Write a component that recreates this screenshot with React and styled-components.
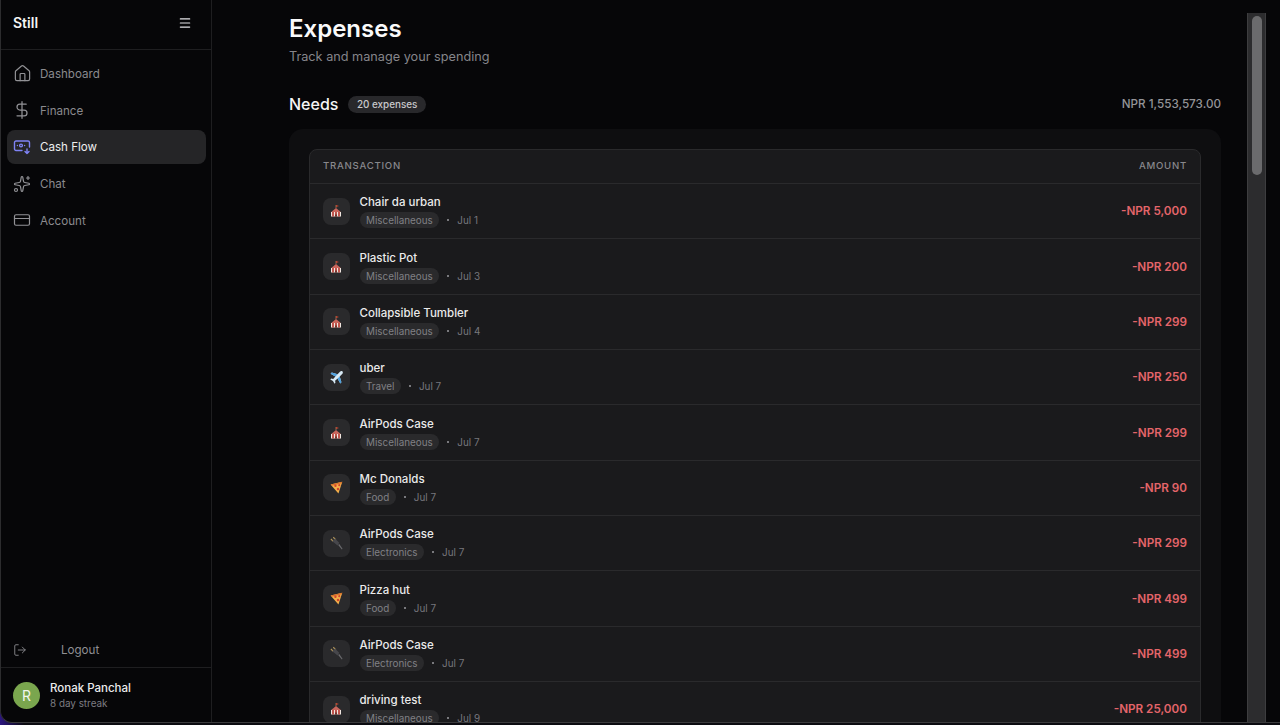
import React from 'react'
import styled, { createGlobalStyle } from 'styled-components'
import { Menu, House, DollarSign, Sparkles, CreditCard, LogOut } from 'lucide-react'

const GlobalStyle = createGlobalStyle`
  html, body {
    margin: 0;
    height: 100%;
    overflow: hidden;
    background: linear-gradient(90deg, #2c1680 0, #0b0b10 24px);
  }
  * { box-sizing: border-box; }
  body {
    font-family: Inter, "Liberation Sans", sans-serif;
    -webkit-font-smoothing: antialiased;
  }
`

const Frame = styled.div`
  display: flex;
  width: 1280px;
  height: 723px;
  background: #060608;
  border-bottom: 1px solid #3a3a3c;
  border-left: 1px solid #2c2c2e;
  border-bottom-left-radius: 12px;
  overflow: hidden;
`

const Sidebar = styled.aside`
  display: flex;
  flex-direction: column;
  flex: 0 0 211px;
  border-right: 1px solid #1e1e20;
`

const Brand = styled.div`
  display: flex;
  align-items: center;
  justify-content: space-between;
  height: 50px;
  padding: 0 19px 4px 12px;
  border-bottom: 1px solid #1e1e20;
`

const Logo = styled.span`
  color: #f5f5f5;
  font-size: 14px;
  font-weight: 600;
`

const MenuButton = styled.span`
  display: flex;
  color: #e4e4e7;
`

const Nav = styled.nav`
  display: flex;
  flex-direction: column;
  flex: 1;
  gap: 3px;
  padding: 7px 5px 0 6px;
`

const NavItem = styled.div`
  display: flex;
  align-items: center;
  gap: 8px;
  height: 33.6px;
  padding-left: 5px;
  border-radius: 8px;
  font-size: 11.6px;
  color: ${({ $active }) => ($active ? '#eeeeee' : '#8a8a8e')};
  background: ${({ $active }) => ($active ? '#252527' : 'transparent')};
`

const NavLabel = styled.span`
  padding-top: 1px;
`

const IconSlot = styled.span`
  display: flex;
  align-items: center;
  justify-content: center;
  flex: none;
  width: 20px;
  height: 20px;
`

const LogoutRow = styled.div`
  display: flex;
  align-items: center;
  gap: 34px;
  height: 34px;
  padding-left: 12px;
  font-size: 11.6px;
  color: #8f8f93;
`

const Profile = styled.div`
  display: flex;
  align-items: center;
  gap: 10px;
  height: 55px;
  padding: 0 12px;
  border-top: 1px solid #1e1e20;
`

const Avatar = styled.div`
  display: flex;
  align-items: center;
  justify-content: center;
  width: 27px;
  height: 27px;
  border-radius: 50%;
  background: #7aa64e;
  color: #f2f6ec;
  font-size: 14px;
`

const ProfileName = styled.div`
  color: #ececec;
  font-size: 11.5px;
  font-weight: 500;
  line-height: 15px;
`

const ProfileSub = styled.div`
  color: #7d7d82;
  font-size: 9.9px;
  line-height: 14px;
`

const Main = styled.main`
  flex: 1;
  min-width: 0;
  padding: 14px 26px 0 77px;
  overflow: hidden;
`

const Title = styled.h1`
  margin: 0;
  color: #fafafa;
  font-size: 24px;
  font-weight: 600;
  line-height: 30px;
`

const Subtitle = styled.p`
  margin: 4px 0 0;
  color: #85858a;
  font-size: 12.7px;
  line-height: 18px;
`

const SectionHead = styled.div`
  display: flex;
  align-items: center;
  justify-content: space-between;
  margin-top: 26px;
  height: 24px;
`

const SectionLeft = styled.div`
  display: flex;
  align-items: center;
  gap: 10px;
`

const SectionTitle = styled.h2`
  margin: 0;
  color: #f5f5f5;
  font-size: 16px;
  font-weight: 500;
`

const CountBadge = styled.span`
  height: 17px;
  padding: 0 8.5px;
  line-height: 17px;
  border-radius: 9px;
  background: #28282b;
  color: #c9c9cc;
  font-size: 9.9px;
  font-weight: 500;
`

const SectionTotal = styled.span`
  color: #949498;
  font-size: 11.7px;
  font-weight: 500;
`

const Panel = styled.section`
  margin-top: 13px;
  padding: 20px 20px 0;
  background: #0e0e10;
  border-radius: 14px 14px 0 0;
`

const Table = styled.div`
  background: #1a1a1c;
  border: 1px solid #2a2a2c;
  border-radius: 8px 8px 0 0;
`

const TableHead = styled.div`
  display: flex;
  align-items: center;
  justify-content: space-between;
  height: 34px;
  padding: 0 13px 2px 13px;
  border-bottom: 1px solid #2a2a2c;
  color: #88888c;
  font-size: 9.6px;
  font-weight: 500;
  letter-spacing: 0.75px;
`

const Row = styled.div`
  display: flex;
  align-items: center;
  height: 55.35px;
  padding: 0 13px 0 12.5px;
  border-bottom: 1px solid #2a2a2c;
`

const IconTile = styled.div`
  display: flex;
  align-items: center;
  justify-content: center;
  flex: none;
  width: 27px;
  height: 27px;
  margin-right: 10px;
  border-radius: 8px;
  background: #2a2a2c;
`

const RowBody = styled.div`
  flex: 1;
  min-width: 0;
`

const RowName = styled.div`
  color: #eaeaea;
  font-size: 11.5px;
  font-weight: 500;
  line-height: 16px;
`

const RowMeta = styled.div`
  display: flex;
  align-items: center;
  margin-top: 2px;
  color: #77777c;
  font-size: 9.9px;
`

const Tag = styled.span`
  height: 16px;
  padding: 0 6.5px;
  line-height: 16px;
  border-radius: 8px;
  background: #2a2a2c;
  color: #808085;
`

const Dot = styled.span`
  width: 2px;
  height: 2px;
  margin: 0 8px;
  border-radius: 50%;
  background: #9a9a9e;
`

const Amount = styled.span`
  color: #e4656a;
  font-size: 11.7px;
  font-weight: 600;
`

const ScrollTrack = styled.div`
  flex: 0 0 19px;
  margin: 13px 14px 0 0;
  padding: 3px 3px 3px 4px;
  background: #2c2c2e;
  border: solid #3d3d3f;
  border-width: 0 1.5px;
`

const ScrollThumb = styled.div`
  height: 159px;
  border-radius: 5px;
  background: #6b6b6d;
`

// small emoji-like pictures, drawn because no colour emoji font is available
const Tent = () => (
  <svg width="14" height="14" viewBox="0 0 14 14">
    <path d="M7 1v3" stroke="#8a6a50" strokeWidth="1" />
    <path d="M7 1l3 1-3 1z" fill="#c8452f" />
    <path d="M7 4L2.2 8h9.6z" fill="#c9665c" />
    <path d="M2 8h10v4.5H2z" fill="#f0e6e0" />
    <path d="M3.2 8h1.6v4.5H3.2zM6.2 8h1.6v4.5H6.2zM9.2 8h1.6v4.5H9.2z" fill="#b5322a" />
    <path d="M6 12.5L7 9.5l1 3z" fill="#4a2520" />
  </svg>
)

const Plane = () => (
  <svg width="15" height="15" viewBox="0 0 14 14">
    <path d="M12.6 1.4c-.7-.6-1.7-.4-2.4.3L8 4 2.6 2.4 1.5 3.5 6 6 3.9 8.3 2 8l-.8.8 2.5 1.5 1.5 2.5.8-.8-.3-1.9L8 8l2.5 4.5 1.1-1.1L10 6l2.3-2.2c.7-.7.9-1.7.3-2.4z" fill="#d8eaf5" />
    <path d="M8 4L2.6 2.4 1.5 3.5 6 6zM10 6l1.6 5.4-1.1 1.1L8 8z" fill="#4d9fdc" />
  </svg>
)

const Pizza = () => (
  <svg width="15" height="15" viewBox="0 0 14 14">
    <path d="M1.5 4.2L12.4 1.6 8.8 12.6z" fill="#f3b04a" />
    <path d="M1.5 4.2L12.4 1.6 12 3 2.6 5.4z" fill="#d9722c" />
    <circle cx="6" cy="5.4" r="1.1" fill="#d5432e" />
    <circle cx="9.6" cy="4.8" r="1" fill="#d5432e" />
    <circle cx="8.4" cy="8.4" r="1.1" fill="#d5432e" />
  </svg>
)

const Plug = () => (
  <svg width="15" height="15" viewBox="0 0 14 14">
    <path d="M1.8 2.8l2.4 2.4M4 1.2l2.4 2.4" stroke="#b0955c" strokeWidth="1.1" />
    <path d="M3 5l2.6-2.6 4 4-1.6 2.4z" fill="#47474b" />
    <path d="M8.6 8.4l1-1 3 4.6-.6.6z" fill="#6a6a6e" />
  </svg>
)

const CashFlowIcon = () => (
  <svg width="18" height="18" viewBox="0 0 18 18" fill="none" stroke="#7f83f5" strokeWidth="1.4" strokeLinecap="round" strokeLinejoin="round">
    <path d="M9 12.5H3a1.5 1.5 0 0 1-1.5-1.5V4.5A1.5 1.5 0 0 1 3 3h12a1.5 1.5 0 0 1 1.5 1.5V9" />
    <circle cx="8" cy="7.5" r="1.4" />
    <path d="M4.4 7.5h.01M11.6 7.5h.01" />
    <path d="M14 11v4.5M12 13.6l2 2 2-2" />
  </svg>
)

const pictures = {
  Miscellaneous: <Tent />,
  Travel: <Plane />,
  Food: <Pizza />,
  Electronics: <Plug />,
}

const navItems = [
  { label: 'Dashboard', icon: <House size={19} strokeWidth={1.5} color="#929296" /> },
  { label: 'Finance', icon: <DollarSign size={20} strokeWidth={1.5} color="#929296" /> },
  { label: 'Cash Flow', icon: <CashFlowIcon />, active: true },
  { label: 'Chat', icon: <Sparkles size={18} strokeWidth={1.6} color="#929296" /> },
  { label: 'Account', icon: <CreditCard size={18} strokeWidth={1.6} color="#929296" /> },
]

const expenses = [
  { name: 'Chair da urban', tag: 'Miscellaneous', date: 'Jul 1', amount: '-NPR 5,000' },
  { name: 'Plastic Pot', tag: 'Miscellaneous', date: 'Jul 3', amount: '-NPR 200' },
  { name: 'Collapsible Tumbler', tag: 'Miscellaneous', date: 'Jul 4', amount: '-NPR 299' },
  { name: 'uber', tag: 'Travel', date: 'Jul 7', amount: '-NPR 250' },
  { name: 'AirPods Case', tag: 'Miscellaneous', date: 'Jul 7', amount: '-NPR 299' },
  { name: 'Mc Donalds', tag: 'Food', date: 'Jul 7', amount: '-NPR 90' },
  { name: 'AirPods Case', tag: 'Electronics', date: 'Jul 7', amount: '-NPR 299' },
  { name: 'Pizza hut', tag: 'Food', date: 'Jul 7', amount: '-NPR 499' },
  { name: 'AirPods Case', tag: 'Electronics', date: 'Jul 7', amount: '-NPR 499' },
  { name: 'driving test', tag: 'Miscellaneous', date: 'Jul 9', amount: '-NPR 25,000' },
]

const App = () => (
  <>
    <GlobalStyle />
    <Frame>
      <Sidebar>
        <Brand>
          <Logo>Still</Logo>
          <MenuButton><Menu size={14} /></MenuButton>
        </Brand>
        <Nav>
          {navItems.map(item => (
            <NavItem key={item.label} $active={item.active}>
              <IconSlot>{item.icon}</IconSlot>
              <NavLabel>{item.label}</NavLabel>
            </NavItem>
          ))}
        </Nav>
        <LogoutRow>
          <LogOut size={14} strokeWidth={1.5} color="#8f8f93" />
          Logout
        </LogoutRow>
        <Profile>
          <Avatar>R</Avatar>
          <div>
            <ProfileName>Ronak Panchal</ProfileName>
            <ProfileSub>8 day streak</ProfileSub>
          </div>
        </Profile>
      </Sidebar>
      <Main>
        <Title>Expenses</Title>
        <Subtitle>Track and manage your spending</Subtitle>
        <SectionHead>
          <SectionLeft>
            <SectionTitle>Needs</SectionTitle>
            <CountBadge>20 expenses</CountBadge>
          </SectionLeft>
          <SectionTotal>NPR 1,553,573.00</SectionTotal>
        </SectionHead>
        <Panel>
          <Table>
            <TableHead>
              <span>TRANSACTION</span>
              <span>AMOUNT</span>
            </TableHead>
            {expenses.map((e, i) => (
              <Row key={i}>
                <IconTile>{pictures[e.tag]}</IconTile>
                <RowBody>
                  <RowName>{e.name}</RowName>
                  <RowMeta>
                    <Tag>{e.tag}</Tag>
                    <Dot />
                    {e.date}
                  </RowMeta>
                </RowBody>
                <Amount>{e.amount}</Amount>
              </Row>
            ))}
          </Table>
        </Panel>
      </Main>
      <ScrollTrack>
        <ScrollThumb />
      </ScrollTrack>
    </Frame>
  </>
)

export default App
